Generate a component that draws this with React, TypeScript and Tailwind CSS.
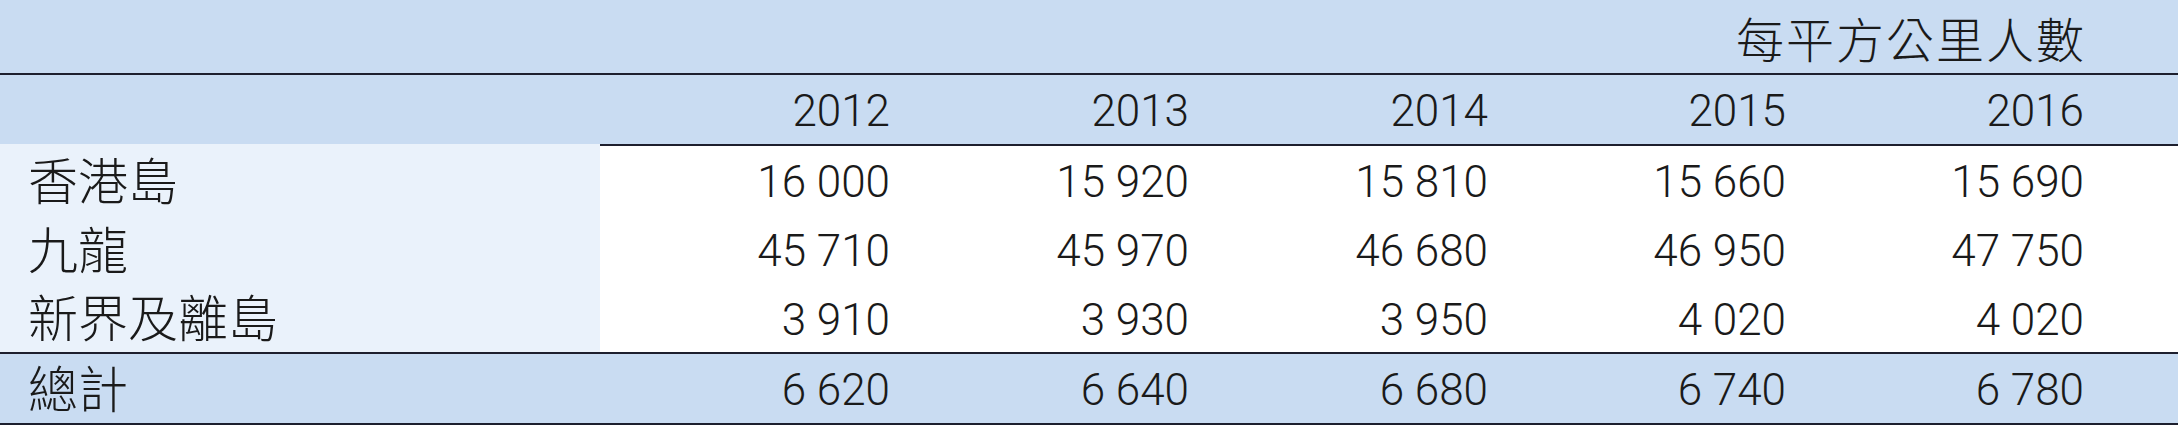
const cols = "grid grid-cols-[600px_290px_299px_299px_298px_298px_1fr]";

const years = ["2012", "2013", "2014", "2015", "2016"];

const rows = [
  { label: "香港島", values: ["16 000", "15 920", "15 810", "15 660", "15 690"], h: "h-[69px]" },
  { label: "九龍", values: ["45 710", "45 970", "46 680", "46 950", "47 750"], h: "h-[69px]" },
  { label: "新界及離島", values: ["3 910", "3 930", "3 950", "4 020", "4 020"], h: "h-[68px]" },
];

const total = { label: "總計", values: ["6 620", "6 640", "6 680", "6 740", "6 780"] };

const num = "flex items-center justify-end pt-[3px] text-[44px] leading-none";
const label = "flex items-center pl-[28px] pt-[4px] text-[50px] leading-none";

export default function App() {
  return (
    <div
      className="w-[2178px] h-[425px] overflow-hidden bg-white text-[#1a1a1a] font-light"
      style={{ fontFamily: 'Roboto, "Noto Sans CJK TC", sans-serif' }}
    >
      <div className="h-[73px] bg-[#c9dcf2] flex items-end justify-end pr-[92px] pb-[7px]">
        <span className="text-[48px] leading-none tracking-[2px]">每平方公里人數</span>
      </div>
      <div className="h-[2px] bg-[#1d1f2e]" />

      <div className={`${cols} h-[71px]`}>
        <div className="bg-[#c9dcf2] border-b-2 border-[#eaf2fb]" />
        {years.map((y) => (
          <div key={y} className={`${num} bg-[#c9dcf2] border-b-2 border-[#1d1f2e]`}>
            {y}
          </div>
        ))}
        <div className="bg-[#c9dcf2] border-b-2 border-[#1d1f2e]" />
      </div>

      {rows.map((r) => (
        <div key={r.label} className={`${cols} ${r.h}`}>
          <div className={`${label} bg-[#eaf2fb]`}>{r.label}</div>
          {r.values.map((v, i) => (
            <div key={i} className={num}>
              {v}
            </div>
          ))}
          <div />
        </div>
      ))}

      <div className="h-[2px] bg-[#1d1f2e]" />
      <div className={`${cols} h-[69px] bg-[#c9dcf2]`}>
        <div className={label}>{total.label}</div>
        {total.values.map((v, i) => (
          <div key={i} className={num}>
            {v}
          </div>
        ))}
        <div />
      </div>
      <div className="h-[2px] bg-[#1d1f2e]" />
    </div>
  );
}
